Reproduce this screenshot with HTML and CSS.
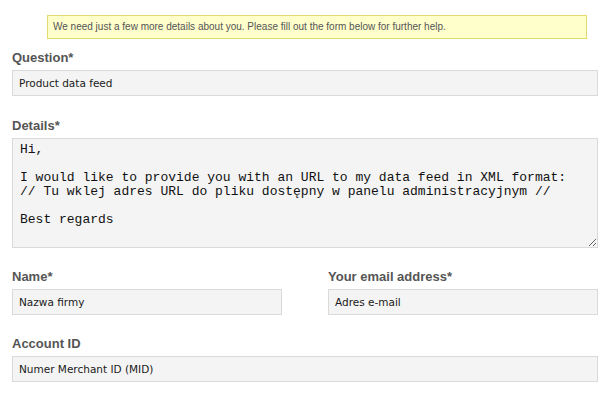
FILE: index.html
```html
<!DOCTYPE html>
<html lang="en">
<head>
    <meta charset="UTF-8">
    <meta name="viewport" content="width=device-width, initial-scale=1.0">
    <title>Contact Form</title>
    <link rel="stylesheet" href="styles.css">
</head>
<body>
    <div class="page">
        <p class="notice">We need just a few more details about you. Please fill out the form below for further help.</p>

        <form class="contact-form">
            <div class="field">
                <label for="question">Question*</label>
                <input type="text" id="question" value="Product data feed">
            </div>

            <div class="field">
                <label for="details">Details*</label>
                <textarea id="details">Hi,

I would like to provide you with an URL to my data feed in XML format:
// Tu wklej adres URL do pliku dostępny w panelu administracyjnym //

Best regards</textarea>
            </div>

            <div class="field-row">
                <div class="field">
                    <label for="name">Name*</label>
                    <input type="text" id="name" value="Nazwa firmy">
                </div>
                <div class="field">
                    <label for="email">Your email address*</label>
                    <input type="text" id="email" value="Adres e-mail">
                </div>
            </div>

            <div class="field">
                <label for="account">Account ID</label>
                <input type="text" id="account" value="Numer Merchant ID (MID)">
            </div>
        </form>
    </div>
</body>
</html>
```

FILE: styles.css
```css
/* General Styles */
body {
    margin: 0;
    padding: 0;
    background-color: #fff;
    font-family: 'Liberation Sans', Arial, sans-serif;
    color: #333;
}

.page {
    padding: 0 12px;
}

/* Yellow info box */
.notice {
    margin: 15px 11px 0 35px;
    padding: 0 5px;
    border: 1px solid #e2dc6c;
    background-color: #ffffcc;
    font-size: 10px;
    line-height: 22px;
    color: #555;
}

/* Form */
.contact-form {
    margin: 11px 0 0;
}

.field {
    margin-bottom: 21px;
}

.contact-form > .field:first-child {
    margin-bottom: 22px;
}

.field label {
    display: block;
    margin-bottom: 4px;
    font-size: 13px;
    font-weight: bold;
    line-height: 16px;
    color: #555;
}

.field input,
.field textarea {
    display: block;
    width: 100%;
    box-sizing: border-box;
    margin: 0;
    border: 1px solid #dadada;
    border-radius: 0;
    background-color: #f4f4f4;
    color: #1a1a1a;
    outline: none;
}

.field input {
    height: 26px;
    padding: 0 6px;
    font-family: 'DejaVu Sans', Verdana, sans-serif;
    font-size: 10.5px;
}

.field textarea {
    height: 110px;
    padding: 4px 7px;
    font-family: 'Liberation Mono', 'Courier New', monospace;
    font-size: 13px;
    line-height: 14px;
    color: #111;
}

.field-row {
    display: grid;
    grid-template-columns: 1fr 1fr;
    column-gap: 46px;
}
```
